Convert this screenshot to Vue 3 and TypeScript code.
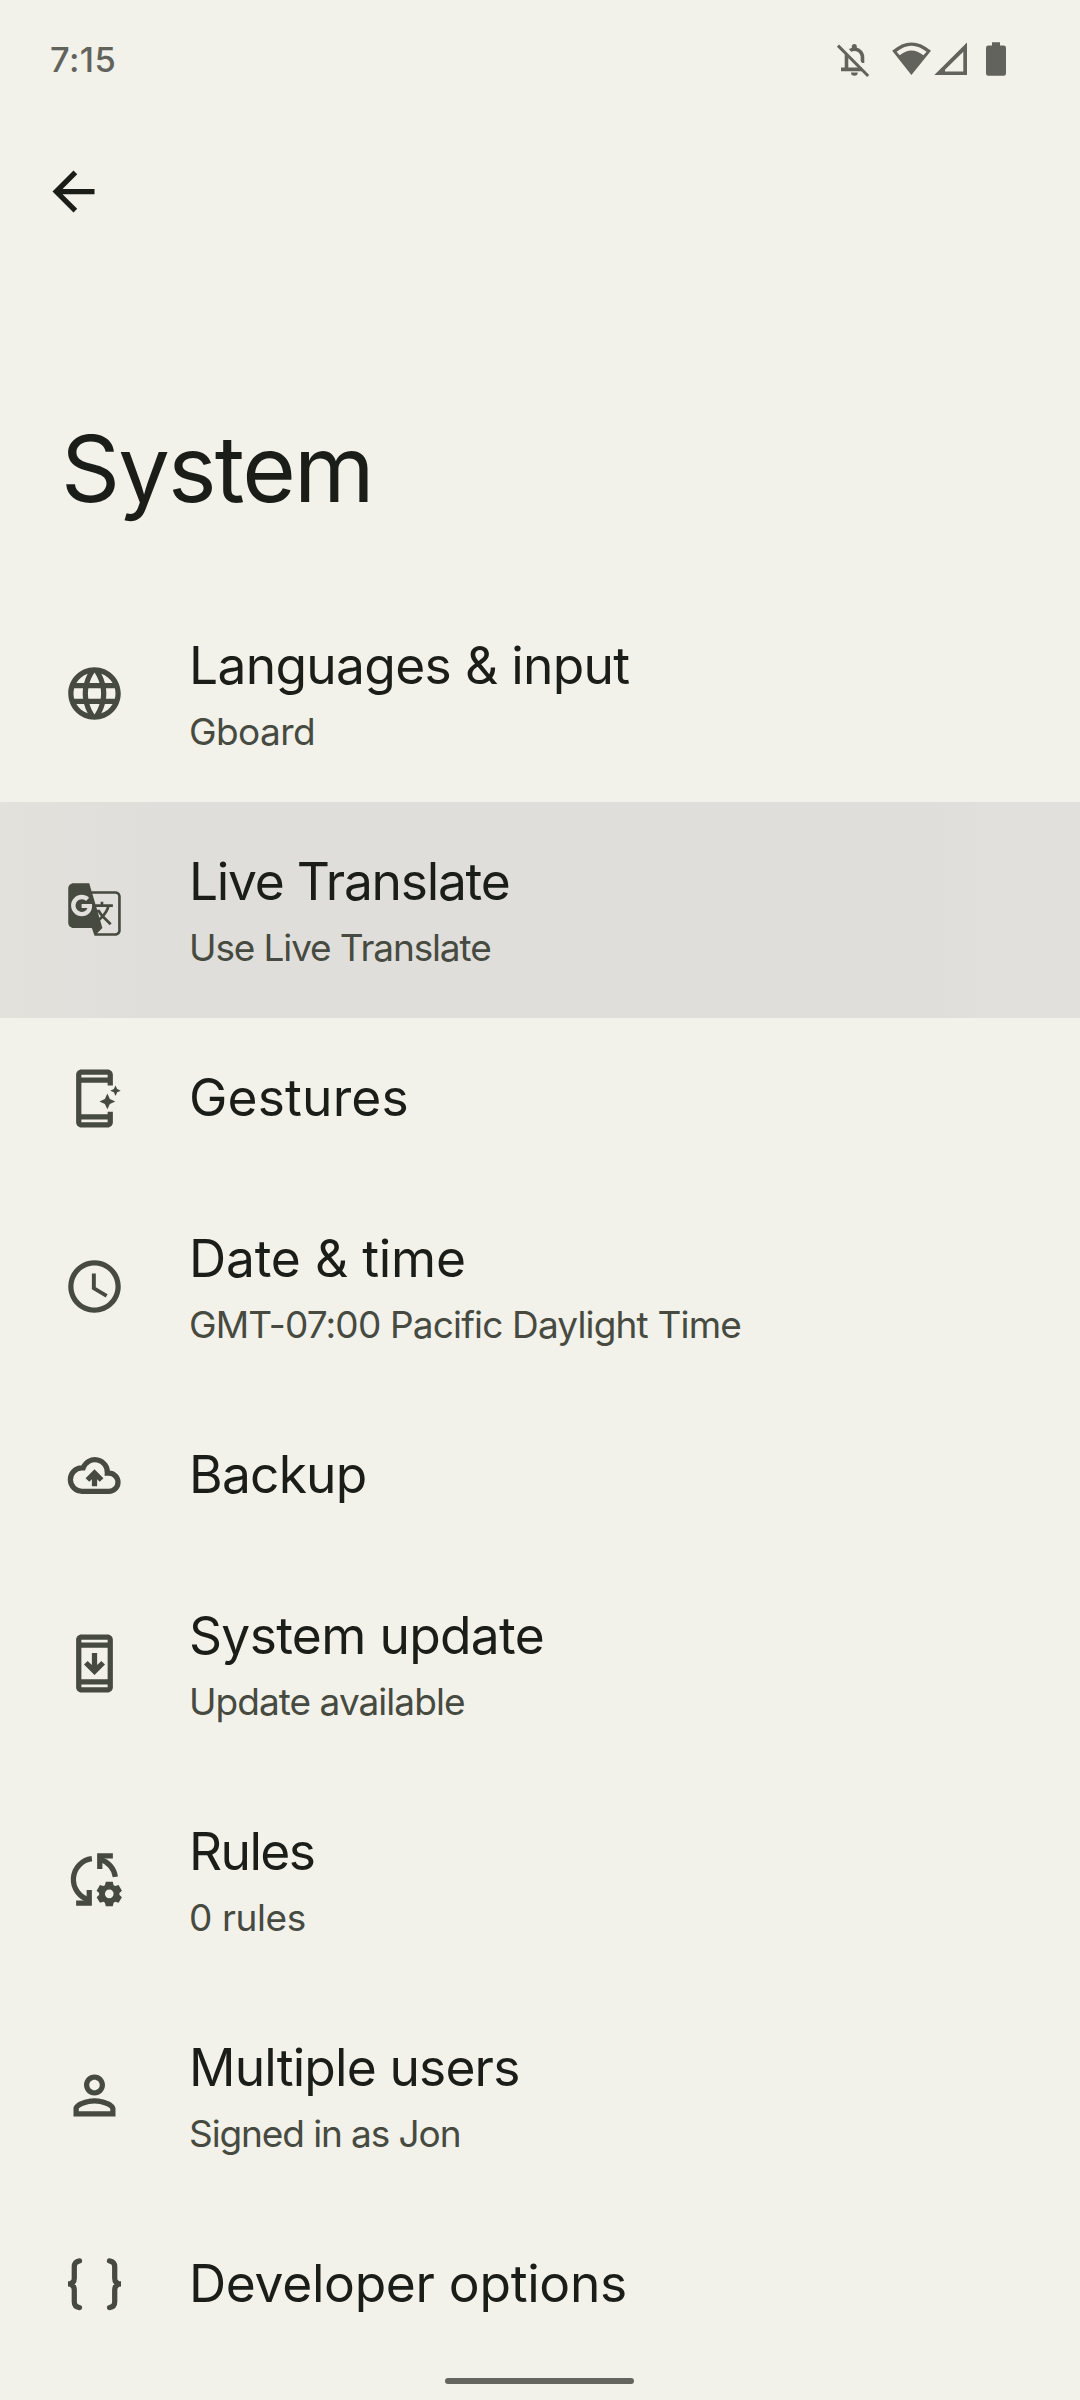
<script setup lang="ts">
interface SettingsItem {
  title: string
  tracking: number
  icon: string
  summary?: string
  summaryTracking?: number
  active?: boolean
}

const items: SettingsItem[] = [
  { title: 'Languages & input', tracking: -0.68, icon: 'language', summary: 'Gboard', summaryTracking: -0.6 },
  { title: 'Live Translate', tracking: -1.26, icon: 'translate', summary: 'Use Live Translate', summaryTracking: -1.13, active: true },
  { title: 'Gestures', tracking: 0.15, icon: 'gestures' },
  { title: 'Date & time', tracking: -0.2, icon: 'clock', summary: 'GMT-07:00 Pacific Daylight Time', summaryTracking: -0.83 },
  { title: 'Backup', tracking: -0.8, icon: 'backup' },
  { title: 'System update', tracking: -0.68, icon: 'update', summary: 'Update available', summaryTracking: -0.96 },
  { title: 'Rules', tracking: -1.6, icon: 'rules', summary: '0 rules', summaryTracking: -0.4 },
  { title: 'Multiple users', tracking: -0.84, icon: 'person', summary: 'Signed in as Jon', summaryTracking: -1.1 },
  { title: 'Developer options', tracking: -0.31, icon: 'braces' },
]
</script>

<template>
  <div class="screen">
    <header class="status-bar">
      <span class="time">7:15</span>
      <div class="status-icons">
        <svg class="bell" width="34" height="36" viewBox="836 42 34 36">
          <g fill="none" stroke="currentColor" stroke-width="3.6">
            <path d="M846.5 54.5V69M841 69.4H862" />
            <path d="M849.8 50.6Q854.3 48 858.3 50.2Q862.5 52.6 862.5 57.6V63" />
          </g>
          <path d="M851.8 48.5V46.4a2.5 2.5 0 0 1 5 0v2.1zM851 72.6h6.8a3.4 3.2 0 0 1-6.8 0z" />
          <path d="M840.5 42.5L872 75" stroke="#f2f1ea" stroke-width="2.6" />
          <path d="M838 45.6L868.2 76" stroke="currentColor" stroke-width="3" />
        </svg>
        <svg class="wifi" width="40" height="36" viewBox="892 42 40 36">
          <path fill-rule="evenodd" d="M911.4 75L892.2 50.8Q911.4 34 931 50.8zM896.6 51.8L899.7 55.2Q911.4 45.8 923.4 55.2L926.6 51.8Q911.4 39.6 896.6 51.8z" />
        </svg>
        <svg class="signal" width="34" height="36" viewBox="934 42 34 36">
          <path fill-rule="evenodd" d="M934.3 75L967 42.6V75zM945 71.4H963.3V51.8L945 69.8z" />
        </svg>
        <svg class="battery" width="20" height="36" viewBox="986 42 20 36">
          <path d="M992 42.2h8v3.4h3.7a2.3 2.3 0 0 1 2.3 2.3v25.6a2.3 2.3 0 0 1-2.3 2.3h-15.4a2.3 2.3 0 0 1-2.3-2.3V47.9a2.3 2.3 0 0 1 2.3-2.3h3.7z" />
        </svg>
      </div>
    </header>

    <nav class="toolbar">
      <svg class="back" viewBox="0 0 24 24">
        <path d="M20 11H7.83l5.59-5.59L12 4l-8 8 8 8 1.41-1.41L7.83 13H20v-2z" />
      </svg>
    </nav>

    <h1 class="page-title">System</h1>

    <ul class="list">
      <li v-for="item in items" :key="item.title" class="row" :class="{ single: !item.summary, active: item.active }">
        <svg class="icon" viewBox="0 0 24 24">
          <path v-if="item.icon === 'language'" d="M11.99 2C6.47 2 2 6.48 2 12s4.47 10 9.99 10C17.52 22 22 17.52 22 12S17.52 2 11.99 2zm6.93 6h-2.95c-.32-1.25-.78-2.45-1.38-3.56 1.84.63 3.37 1.91 4.33 3.56zM12 4.04c.83 1.2 1.48 2.53 1.91 3.96h-3.82c.43-1.43 1.08-2.76 1.91-3.96zM4.26 14C4.1 13.36 4 12.69 4 12s.1-1.36.26-2h3.38c-.08.66-.14 1.32-.14 2 0 .68.06 1.34.14 2H4.26zm.82 2h2.95c.32 1.25.78 2.45 1.38 3.56-1.84-.63-3.37-1.9-4.33-3.56zm2.95-8H5.08c.96-1.66 2.49-2.93 4.33-3.56C8.81 5.55 8.35 6.75 8.03 8zM12 19.96c-.83-1.2-1.48-2.53-1.91-3.96h3.82c-.43 1.43-1.08 2.76-1.91 3.96zM14.34 14H9.66c-.09-.66-.16-1.32-.16-2 0-.68.07-1.35.16-2h4.68c.09.65.16 1.32.16 2 0 .68-.07 1.34-.16 2zm.25 5.56c.6-1.11 1.06-2.31 1.38-3.56h2.95c-.96 1.65-2.49 2.93-4.33 3.56zM16.36 14c.08-.66.14-1.32.14-2 0-.68-.06-1.34-.14-2h3.38c.16.64.26 1.31.26 2s-.1 1.36-.26 2h-3.38z" />
          <path v-else-if="item.icon === 'translate'" d="M20 5H10.88L10 2H4c-1.1 0-2 .9-2 2v13c0 1.1.9 2 2 2h7l1 3h8c1.1 0 2-.9 2-2V7c0-1.1-.9-2-2-2zM7.17 14.59c-2.25 0-4.09-1.83-4.09-4.09s1.83-4.09 4.09-4.09c1.04 0 1.99.37 2.74 1.07l.07.06-1.23 1.18-.06-.05c-.29-.27-.78-.59-1.52-.59-1.31 0-2.38 1.09-2.38 2.42s1.07 2.42 2.38 2.42c1.37 0 1.96-.87 2.12-1.46H7.08V9.91h3.95l.01.07c.04.21.05.4.05.61 0 2.35-1.61 4-3.92 4zm6.03-1.71c.33.6.74 1.18 1.19 1.7l-.54.53-.65-2.23zm.77-.76h-.99l-.31-1.04h3.99s-.34 1.31-1.56 2.74c-.52-.62-.89-1.23-1.13-1.7zM21 20c0 .55-.45 1-1 1h-7l2-2-.81-2.77.92-.92L17.79 18l.73-.73-2.71-2.68c.9-1.03 1.6-2.25 1.92-3.51H19v-1.04h-3.64V9h-1.04v1.04h-1.96L11.18 6H20c.55 0 1 .45 1 1v13z" />
          <g v-else-if="item.icon === 'gestures'">
            <path fill-rule="evenodd" d="M7 .95h10c1.1 0 2 .9 2 2V7h-2V6H7v12h10v-1h2v4.05c0 1.1-.9 2-2 2H7c-1.1 0-2-.9-2-2V2.95c0-1.1.9-2 2-2zM7 2.95V4h10V2.95zM7 20v1.05h10V20z" />
            <path d="M16.9 10.1l.95 2.05 2.05.95-2.05.95-.95 2.05-.95-2.05-2.05-.95 2.05-.95zM20 7l.63 1.37L22 9l-1.37.63L20 11l-.63-1.37L18 9l1.37-.63z" />
          </g>
          <path v-else-if="item.icon === 'clock'" d="M11.99 2C6.47 2 2 6.48 2 12s4.47 10 9.99 10C17.52 22 22 17.52 22 12S17.52 2 11.99 2zM12 20c-4.42 0-8-3.58-8-8s3.58-8 8-8 8 3.58 8 8-3.58 8-8 8zm.5-13H11v6l5.25 3.15.75-1.23-4.5-2.67z" />
          <g v-else-if="item.icon === 'backup'">
            <path class="line" d="M17.5 18H7.4a4.4 4.4 0 0 1-.3-8.9h.6A4.75 4.75 0 0 1 16.9 11.1h.6a3.45 3.45 0 0 1 0 6.9z" />
            <path d="M12 9.6l-3.4 3.4 1.4 1.4 1-1v2.7h2v-2.7l1 1 1.4-1.4z" />
          </g>
          <g v-else-if="item.icon === 'update'">
            <path fill-rule="evenodd" d="M7 .95h10c1.1 0 2 .9 2 2v18.1c0 1.1-.9 2-2 2H7c-1.1 0-2-.9-2-2V2.95c0-1.1.9-2 2-2zM7 2.95V4h10V2.95zM7 6v12h10V6zM7 20v1.05h10V20z" />
            <path d="M12 16.4l4-4-1.4-1.4-1.6 1.6V8h-2v4.6L9.4 11 8 12.4z" />
          </g>
          <g v-else-if="item.icon === 'rules'">
            <path class="line" d="M11 4.06a8 8 0 0 0-1 15.7" />
            <path class="line" d="M14.3 4.4A8 8 0 0 1 19.94 11" />
            <path d="M5 20h4v-4h2v6H5zM13 8V2h6v2h-4v4z" />
            <path fill-rule="evenodd" d="M16.3 13.1h2.8l.35 1.35.65.38 1.35-.4 1.35 2.25-1 .9v.8l1 .9-1.35 2.25-1.35-.4-.65.38-.35 1.4h-2.8l-.35-1.4-.65-.38-1.35.4-1.35-2.25 1-.9v-.8l-1-.9 1.35-2.25 1.35.4.65-.38zM17.7 16.2a1.75 1.75 0 1 0 0 3.5 1.75 1.75 0 0 0 0-3.5z" transform="translate(.9 .5) scale(.945)" />
          </g>
          <path v-else-if="item.icon === 'person'" d="M12 6c1.1 0 2 .9 2 2s-.9 2-2 2-2-.9-2-2 .9-2 2-2m0 9c2.7 0 5.8 1.29 6 2v1H6v-.99c.2-.72 3.3-2.01 6-2.01m0-11C9.79 4 8 5.79 8 8s1.79 4 4 4 4-1.79 4-4-1.79-4-4-4zm0 9c-2.67 0-8 1.34-8 4v3h16v-3c0-2.66-5.33-4-8-4z" />
          <path v-else class="line round" d="M6.3 3Q4.3 3.3 4.3 5.3V9.6Q4.3 11.8 1.9 11.8Q4.3 11.8 4.3 14.2V18.6Q4.3 20.6 6.3 20.8M17.7 3Q19.7 3.3 19.7 5.3V9.6Q19.7 11.8 22.1 11.8Q19.7 11.8 19.7 14.2V18.6Q19.7 20.6 17.7 20.8" />
        </svg>
        <div class="text">
          <div class="title" :style="{ letterSpacing: item.tracking + 'px' }">{{ item.title }}</div>
          <div v-if="item.summary" class="summary" :style="{ letterSpacing: item.summaryTracking + 'px' }">{{ item.summary }}</div>
        </div>
      </li>
    </ul>

    <footer class="nav-bar"><div class="handle"></div></footer>
  </div>
</template>

<style>
body {
  background: #f2f1ea;
}
</style>

<style scoped>
.screen {
  width: 1080px;
  height: 2400px;
  overflow: hidden;
  display: flex;
  flex-direction: column;
  background: #f2f1ea;
  color: #1b1d18;
  font-family: Inter, Roboto, "Liberation Sans", sans-serif;
}
svg {
  display: block;
  fill: currentColor;
}
.status-bar {
  box-sizing: border-box;
  height: 120px;
  padding: 0 74px 0 50px;
  display: flex;
  align-items: center;
  justify-content: space-between;
  color: #62635c;
}
.time {
  font-size: 34.5px;
  line-height: 40px;
  font-weight: 500;
  letter-spacing: 0.4px;
}
.status-icons {
  display: flex;
}
.wifi {
  margin-left: 22px;
}
.signal {
  margin-left: 2px;
}
.battery {
  margin-left: 18px;
}
.toolbar {
  box-sizing: border-box;
  height: 294px;
  padding: 40px 42px;
}
.back {
  width: 63px;
  height: 63px;
}
.page-title {
  margin: 0;
  height: 172px;
  padding-left: 61px;
  font-size: 92px;
  line-height: 110px;
  font-weight: 400;
  letter-spacing: -1.83px;
}
.list {
  margin: 0;
  padding: 0;
  list-style: none;
}
.row {
  box-sizing: border-box;
  height: 216px;
  padding: 0 63px 1px;
  display: flex;
  align-items: center;
  gap: 63px;
}
.row.single {
  height: 161px;
  padding-bottom: 0;
}
.row.active {
  background: linear-gradient(90deg, #e2e1dc 0%, #dfdeda 16%, #dfdeda 85%, #e1e0dc 93%, #e1e0dc 100%);
}
.icon {
  width: 63px;
  height: 63px;
  flex: none;
  color: #464a40;
}
.line {
  fill: none;
  stroke: currentColor;
  stroke-width: 2;
}
.round {
  stroke-linecap: round;
}
.text {
  align-self: flex-start;
  padding-top: 44px;
  white-space: nowrap;
}
.title {
  font-size: 51.5px;
  line-height: 70px;
}
.summary {
  margin-top: 8px;
  font-size: 37px;
  line-height: 48px;
  color: #464a40;
}
.nav-bar {
  display: flex;
  padding: 13px 0 0 445px;
}
.handle {
  width: 189px;
  height: 6px;
  border-radius: 3px;
  background: #64655e;
}
</style>
